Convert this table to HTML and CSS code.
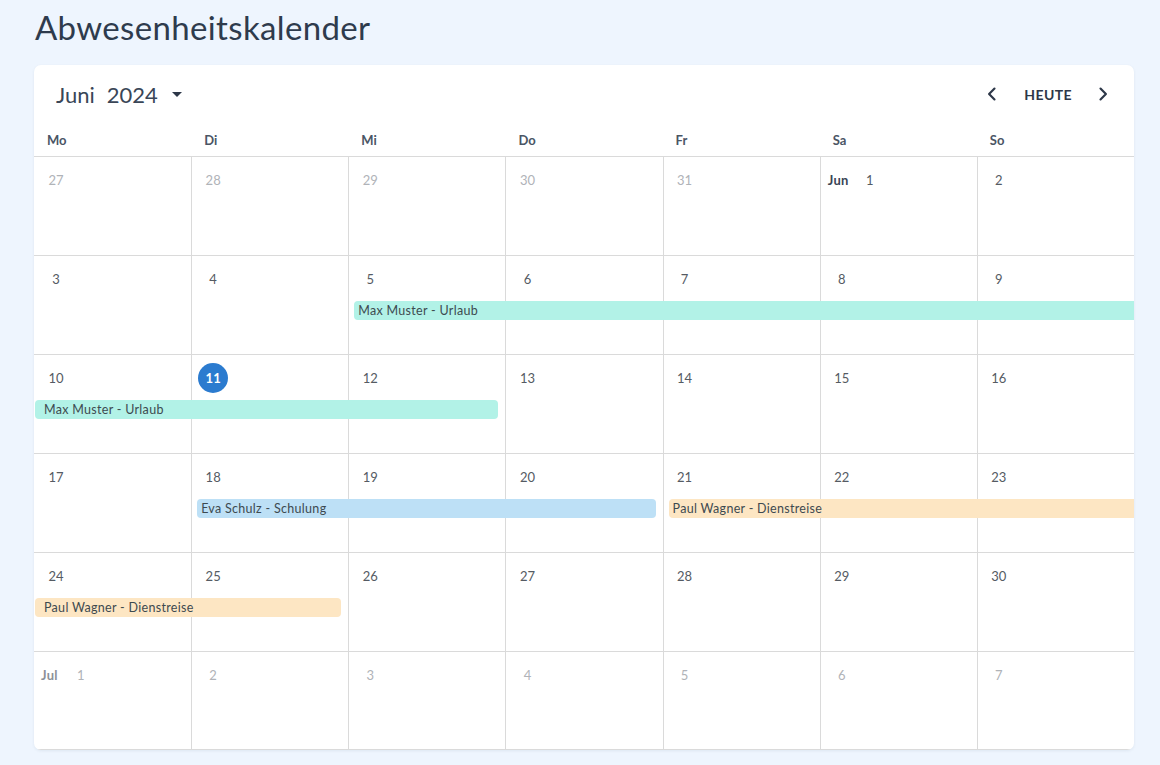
FILE: index.html
```html
<!DOCTYPE html>
<html lang="de">
<head>
<meta charset="utf-8">
<title>Abwesenheitskalender</title>
<link rel="stylesheet" href="styles.css">
</head>
<body>
<h1 class="title">Abwesenheitskalender</h1>
<div class="card">
  <div class="toolbar">
    <div class="month-pick">
      <span class="m">Juni</span><span class="y">2024</span><span class="caret"></span>
    </div>
    <div class="nav">
      <button class="navbtn" aria-label="Zurück"><svg width="20" height="20" viewBox="0 0 24 24"><path d="M15 5.5 8.5 12l6.5 6.5" fill="none" stroke="#2d3748" stroke-width="2.6" stroke-linecap="round" stroke-linejoin="round"/></svg></button>
      <button class="today-btn">HEUTE</button>
      <button class="navbtn" aria-label="Weiter"><svg width="20" height="20" viewBox="0 0 24 24"><path d="M9 5.5 15.5 12 9 18.5" fill="none" stroke="#2d3748" stroke-width="2.6" stroke-linecap="round" stroke-linejoin="round"/></svg></button>
    </div>
  </div>
  <div class="weekdays">
    <div>Mo</div><div>Di</div><div>Mi</div><div>Do</div><div>Fr</div><div>Sa</div><div>So</div>
  </div>
  <div class="month">
    <div class="week">
      <div class="day other"><span class="num">27</span></div>
      <div class="day other"><span class="num">28</span></div>
      <div class="day other"><span class="num">29</span></div>
      <div class="day other"><span class="num">30</span></div>
      <div class="day other"><span class="num">31</span></div>
      <div class="day"><span class="mon">Jun</span><span class="num">1</span></div>
      <div class="day"><span class="num">2</span></div>
    </div>
    <div class="week">
      <div class="day"><span class="num">3</span></div>
      <div class="day"><span class="num">4</span></div>
      <div class="day"><span class="num">5</span></div>
      <div class="day"><span class="num">6</span></div>
      <div class="day"><span class="num">7</span></div>
      <div class="day"><span class="num">8</span></div>
      <div class="day"><span class="num">9</span></div>
      <div class="ev teal open-end" style="grid-column: 3 / 8">Max Muster - Urlaub</div>
    </div>
    <div class="week">
      <div class="day"><span class="num">10</span></div>
      <div class="day"><span class="num today">11</span></div>
      <div class="day"><span class="num">12</span></div>
      <div class="day"><span class="num">13</span></div>
      <div class="day"><span class="num">14</span></div>
      <div class="day"><span class="num">15</span></div>
      <div class="day"><span class="num">16</span></div>
      <div class="ev teal open-start" style="grid-column: 1 / 4">Max Muster - Urlaub</div>
    </div>
    <div class="week">
      <div class="day"><span class="num">17</span></div>
      <div class="day"><span class="num">18</span></div>
      <div class="day"><span class="num">19</span></div>
      <div class="day"><span class="num">20</span></div>
      <div class="day"><span class="num">21</span></div>
      <div class="day"><span class="num">22</span></div>
      <div class="day"><span class="num">23</span></div>
      <div class="ev blue" style="grid-column: 2 / 5">Eva Schulz - Schulung</div>
      <div class="ev orange open-end" style="grid-column: 5 / 8">Paul Wagner - Dienstreise</div>
    </div>
    <div class="week">
      <div class="day"><span class="num">24</span></div>
      <div class="day"><span class="num">25</span></div>
      <div class="day"><span class="num">26</span></div>
      <div class="day"><span class="num">27</span></div>
      <div class="day"><span class="num">28</span></div>
      <div class="day"><span class="num">29</span></div>
      <div class="day"><span class="num">30</span></div>
      <div class="ev orange open-start" style="grid-column: 1 / 3">Paul Wagner - Dienstreise</div>
    </div>
    <div class="week">
      <div class="day other"><span class="mon">Jul</span><span class="num">1</span></div>
      <div class="day other"><span class="num">2</span></div>
      <div class="day other"><span class="num">3</span></div>
      <div class="day other"><span class="num">4</span></div>
      <div class="day other"><span class="num">5</span></div>
      <div class="day other"><span class="num">6</span></div>
      <div class="day other"><span class="num">7</span></div>
    </div>
  </div>
</div>
</body>
</html>
```
FILE: styles.css
```css
* { box-sizing: border-box; }
html, body { margin: 0; padding: 0; }
body {
  background: #eef5fe;
  font-family: "Lato", "Noto Sans", sans-serif;
  color: #2d3a4b;
  padding: 0 26px 16px 34px;
}
.title {
  margin: 0;
  padding: 7px 0 0 1px;
  height: 65px;
  font-size: 33px;
  font-weight: 400;
  letter-spacing: 0.35px;
  line-height: 40px;
  color: #2e3b4d;
}
.card {
  background: #fff;
  border-radius: 7px;
  box-shadow: 0 1px 3px rgba(40, 60, 90, 0.08);
  overflow: hidden;
}
.toolbar {
  height: 60px;
  display: flex;
  align-items: center;
  justify-content: space-between;
  padding: 0 17px 2px 22px;
}
.month-pick {
  display: flex;
  align-items: center;
  font-size: 22px;
  color: #3a4657;
}
.month-pick .y { margin-left: 12px; }
.caret {
  margin-left: 14px;
  width: 0; height: 0;
  border-left: 5px solid transparent;
  border-right: 5px solid transparent;
  border-top: 5px solid #2d3748;
}
.nav { display: flex; align-items: center; }
.navbtn, .today-btn {
  background: none;
  border: 0;
  padding: 0;
  font-family: inherit;
  color: #2d3748;
  cursor: pointer;
  display: flex;
  align-items: center;
  justify-content: center;
}
.navbtn { width: 28px; height: 28px; }
.today-btn {
  font-size: 14px;
  font-weight: 700;
  letter-spacing: 0.4px;
  margin: 0 17px 0 18px;
}
.weekdays {
  display: grid;
  grid-template-columns: repeat(7, minmax(0, 1fr));
  height: 32px;
  border-bottom: 1px solid #dadada;
  font-size: 13px;
  font-weight: 700;
  color: #4a5565;
}
.weekdays div { padding: 7px 0 0 13px; }
.week {
  display: grid;
  grid-template-columns: repeat(7, minmax(0, 1fr));
  grid-template-rows: 45px 19px 1fr;
  height: 99px;
  border-bottom: 1px solid #dadada;
}
.week:last-child { height: 98px; }
.day {
  grid-row: 1 / 4;
  border-left: 1px solid #dadada;
  padding: 8px 7px 8px 6px;
  display: flex;
  align-items: flex-start;
  min-width: 0;
}
.day:nth-child(1) { grid-column: 1; border-left: 0; padding-left: 7px; }
.day:nth-child(2) { grid-column: 2; }
.day:nth-child(3) { grid-column: 3; }
.day:nth-child(4) { grid-column: 4; }
.day:nth-child(5) { grid-column: 5; }
.day:nth-child(6) { grid-column: 6; }
.day:nth-child(7) { grid-column: 7; }
.num {
  width: 30px;
  height: 30px;
  border-radius: 50%;
  display: flex;
  align-items: center;
  justify-content: center;
  font-size: 13px;
  color: #555b63;
}
.other .num { color: #b0b3b8; }
.mon {
  font-size: 13px;
  font-weight: 700;
  color: #3a4455;
  line-height: 30px;
  margin: 0 6px 0 1px;
  letter-spacing: 0.3px;
}
.other .mon { color: #8c9098; margin: 0 8px 0 0; }
.num.today {
  background: #2b7bcf;
  color: #fff;
  font-weight: 700;
}
.ev {
  grid-row: 2;
  align-self: stretch;
  min-width: 0;
  font-size: 12.5px;
  letter-spacing: 0.3px;
  line-height: 19px;
  color: #3d4a50;
  border-radius: 4px;
  margin: 0 7px 0 6px;
  padding-left: 4px;
  white-space: nowrap;
  overflow: hidden;
}
.ev.open-start { margin-left: 1px; padding-left: 9px; }
.ev.open-end { margin-right: 0; border-top-right-radius: 0; border-bottom-right-radius: 0; }
.teal { background: #b2f2e7; }
.blue { background: #bde0f6; }
.orange { background: #fde6c3; }
```
